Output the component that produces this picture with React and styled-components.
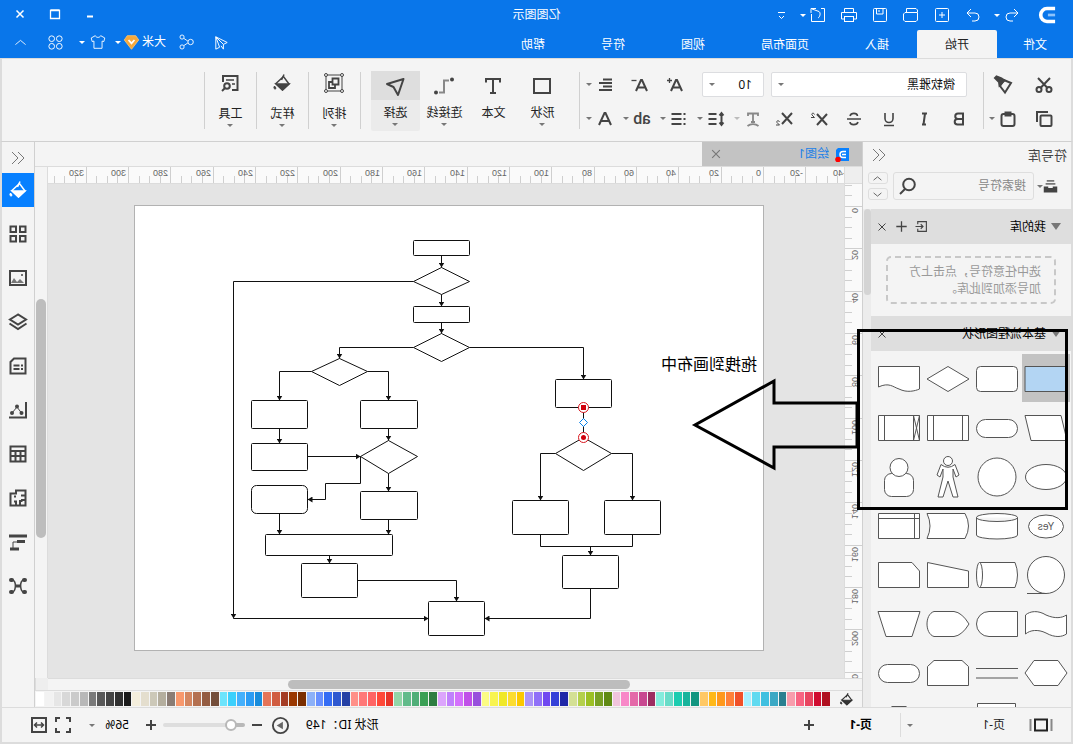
import styled, { createGlobalStyle } from 'styled-components'

import { useEffect, useRef, useState } from 'react'

const GlobalStyle = createGlobalStyle`
  * {
    box-sizing: border-box;
  }

  body {
    margin: 0;
    background: #dedede;
  }

  button, input, select {
    font: inherit;
    color: inherit;
    border: none;
    background: none;
    padding: 0;
    margin: 0;
    outline: none;
  }

  ul {
    list-style: none;
    margin: 0;
    padding: 0;
  }
`

/* The whole window is shown flipped */
const Screen = styled.div`
  position: relative;
  display: flex;
  flex-direction: column;
  width: 100%;
  height: 100vh;
  overflow: hidden;
  transform: scaleX(-1);
  background: #f4f4f4;
  color: #222;
  font-family: 'Noto Sans', 'Noto Sans CJK SC', sans-serif;
  font-size: 12px;
  line-height: 16px;
`

const Svg = styled.svg`
  display: block;
  flex: none;
  fill: none;
  stroke: currentColor;
  stroke-width: ${p => p.$weight || 1};
`

const Caret = styled.span`
  flex: none;
  width: 0;
  height: 0;
  border: 3px solid transparent;
  border-top-color: ${p => p.$color || '#777'};
  border-bottom: none;
`

const Run = styled.div`
  display: flex;
  align-items: center;
  gap: ${p => p.$gap || 0}px;
  margin-left: ${p => p.$left || 0}px;
`

/* ---------- header ---------- */

const Header = styled.header`
  flex: none;
  background: #0976ea;
  color: #fff;
`

const TitleBar = styled.div`
  display: grid;
  grid-template-columns: 1fr auto 1fr;
  align-items: center;
  height: 30px;
`

const QuickTools = styled.div`
  display: flex;
  align-items: center;
  gap: 11px;
  padding-left: 17px;
`

const AppTitle = styled.h1`
  margin: 0;
  font-size: 12px;
  font-weight: 400;
`

const WindowButtons = styled.div`
  display: flex;
  justify-content: flex-end;
  padding: 0 3px 2px 0;
`

const PlainButton = styled.button`
  display: flex;
  align-items: center;
  justify-content: center;
  flex: none;
  width: ${p => p.$width || 20}px;
  height: ${p => p.$height || 24}px;
  color: ${p => p.$color || 'inherit'};
  gap: ${p => p.$gap || 0}px;
  white-space: nowrap;
  cursor: pointer;
`

const TabRow = styled.nav`
  display: flex;
  height: 28px;
`

const MenuTab = styled.button`
  padding: 2px ${p => p.$pad || 28}px 0;
  height: 28px;
  color: #fff;
  border-radius: 2px 2px 0 0;
  cursor: pointer;

  &.active {
    background: #f4f4f4;
    color: #222;
  }
`

const AccountTools = styled.div`
  display: flex;
  align-items: center;
  gap: 8px;
  height: 24px;
  margin-left: auto;
  padding-right: 9px;
`

/* ---------- ribbon ---------- */

const Ribbon = styled.section`
  display: flex;
  flex: none;
  height: 84px;
  padding-top: 12px;
  border: solid #dcdcdc;
  border-width: 1px 2px;
  border-bottom-color: #d0d0d0;
  color: #444;
`

const Divider = styled.div`
  flex: none;
  width: 1px;
  height: 57px;
  margin-top: 1px;
  background: #d0d0d0;
`

const ToolGrid = styled.div`
  display: flex;
  flex-direction: column;
  gap: 9px;
  flex: none;
  padding: 1px ${p => p.$right}px 0 ${p => p.$left}px;
`

const ToolRow = styled.div`
  display: flex;
  align-items: center;
  height: 25px;
  gap: ${p => p.$gap}px;
  padding-left: ${p => p.$indent || 0}px;
`

const InsertTools = styled.div`
  display: flex;
  padding: 0 10px 0 12px;
`

const CaseLabel = styled.span`
  font-family: Roboto, sans-serif;
  font-size: 16px;
  font-weight: 500;
`

const SelectBox = styled.label`
  display: flex;
  align-items: center;
  width: ${p => p.$width}px;
  height: 25px;
  padding: 0 6px 0 11px;
  background: #fff;
  border: 1px solid #dcdde0;
  border-radius: 2px;

  select {
    flex: 1;
    min-width: 0;
    appearance: none;
    color: #111;
  }
`

const BigButton = styled.button`
  display: flex;
  flex-direction: column;
  align-items: center;
  flex: none;
  width: 49px;
  height: 60px;
  border-radius: 2px;
  color: #444;
  background: ${p => p.$active ? '#ebebeb' : 'none'};
  cursor: pointer;
`

const BigIcon = styled.span`
  display: flex;
  align-items: center;
  justify-content: center;
  width: 100%;
  height: 29px;
  margin-bottom: 5px;
  background: ${p => p.$active ? '#dedede' : 'none'};
`

const BigLabel = styled.span`
  color: #222;
  white-space: nowrap;
  margin-bottom: 2px;
`

const GroupButton = styled(BigButton)`
  width: 51px;
`

const GroupIcon = styled(BigIcon)`
  height: 24px;
  margin-bottom: 11px;
`

/* ---------- body ---------- */

const Body = styled.main`
  display: flex;
  flex: 1;
  min-height: 0;
  border: solid #dcdcdc;
  border-width: 0 2px;
`

const Library = styled.aside`
  display: flex;
  flex-direction: column;
  flex: none;
  width: 209px;
  border-right: 1px solid #d0d0d0;
`

const LibraryHead = styled.div`
  display: flex;
  align-items: center;
  justify-content: space-between;
  height: 26px;
  padding: 0 8px 0 4px;

  h2 {
    margin: 0;
    font-size: 13px;
    font-weight: 400;
    color: #444;
  }
`

const SearchRow = styled.div`
  display: flex;
  align-items: center;
  flex: none;
  height: 28px;
  margin: 4px 0 9px;
  padding: 0 5px 0 13px;
  color: #444;
`

const SearchBox = styled.label`
  display: flex;
  align-items: center;
  flex: 1;
  min-width: 0;
  height: 28px;
  margin: 0 5px 0 3px;
  padding: 0 4px 0 7px;
  border: 1px solid #dedede;
  border-radius: 3px;

  input {
    flex: 1;
    min-width: 0;
  }

  input::placeholder {
    color: #888;
    opacity: 1;
  }
`

const Steppers = styled.div`
  display: flex;
  flex-direction: column;
  gap: 4px;

  button {
    display: flex;
    align-items: center;
    justify-content: center;
    width: 20px;
    height: 12px;
    border: 1px solid #dedede;
    border-radius: 3px;
    color: #666;
  }
`

const LibraryBody = styled.div`
  display: flex;
  flex: 1;
  min-height: 0;
`

const LibraryList = styled.div`
  flex: 1;
  overflow: hidden;
`

const Track = styled.div`
  flex: none;
  width: 8px;
  background: #ececec;
`

const Thumb = styled.div`
  width: ${p => p.$width}px;
  height: ${p => p.$height}px;
  margin: ${p => p.$margin || 0};
  border-radius: 5px;
  background: ${p => p.$color || '#bdbdbd'};
`

const GroupHead = styled.div`
  display: flex;
  align-items: center;
  height: 35px;
  padding: 0 1px 0 10px;
  background: #dedede;
  color: #444;

  h3 {
    flex: 1;
    margin: 0 0 0 5px;
    font-size: 12px;
    font-weight: 400;
    color: #000;
  }
`

const Fold = styled.span`
  border: 5px solid transparent;
  border-top: 7px solid #777;
  border-bottom: none;
`

const DropHint = styled.p`
  margin: 12px 15px;
  padding: 5px 0 5px 13px;
  height: 48px;
  border: 2px dashed #c8c8c8;
  border-radius: 5px;
  color: #999;
  line-height: 17px;
`

const ShapeGrid = styled.div`
  display: grid;
  grid-template-columns: repeat(4, 48px);
  gap: 1px;
  padding: 3px 1px;
`

const ShapeButton = styled.button`
  width: 48px;
  height: 48px;
  color: #555;
  background: ${p => p.$active ? '#c3c3c3' : 'none'};

  svg {
    fill: ${p => p.$active ? '#b3d5f3' : '#fff'};
  }

  text {
    fill: #555;
    stroke: none;
    font-family: 'Liberation Sans', sans-serif;
    font-size: 10px;
  }
`

const Workspace = styled.section`
  display: flex;
  flex-direction: column;
  flex: 1;
  min-width: 0;
`

const DocTabs = styled.div`
  flex: none;
  height: 25px;
  border-bottom: 1px solid #dcdcdc;
`

const DocTab = styled.div`
  display: flex;
  align-items: center;
  width: 160px;
  height: 24px;
  padding: 0 6px 0 12px;
  background: #c3c3c3;
  color: #1a80e8;

  span {
    flex: 1;
    margin-left: 6px;
  }
`

const Board = styled.div`
  display: grid;
  flex: 1;
  min-height: 0;
  grid-template-columns: 18px 1fr 13px;
  grid-template-rows: 17px 1fr 13px;
`

const Corner = styled.div`
  background: #eee;
  border: solid #dcdcdc;
  border-width: 0 1px 1px 0;
`

const TopRuler = styled.div`
  min-width: 0;
  overflow: hidden;
  background: #fafafa;
  border-bottom: 1px solid #dcdcdc;
`

const SideRuler = styled(TopRuler)`
  min-height: 0;
  border-bottom: none;
  border-right: 1px solid #dcdcdc;
`

const RulerSvg = styled.svg`
  display: block;
  width: 100%;
  height: 100%;
  stroke: #cfcfcf;
  shape-rendering: crispEdges;

  text {
    stroke: none;
    fill: #666;
    font-family: 'Liberation Sans', sans-serif;
    font-size: 9px;
  }
`

const Canvas = styled.div`
  min-width: 0;
  min-height: 0;
  overflow: hidden;
  padding: 21px 0 0 80px;
  background: #e4e4e4;
`

const Paper = styled.div`
  width: 630px;
  height: 446px;
  background: #fff;
  border: 1px solid #b2b2b2;

  svg {
    display: block;
  }
`

const RightScroll = styled.div`
  grid-column: 3;
  grid-row: 1 / 3;
  border-left: 1px solid #dcdcdc;
`

const BottomScroll = styled.div`
  grid-column: 1 / 3;
  border: solid #dcdcdc;
  border-width: 1px 0;
`

const Palette = styled.div`
  display: flex;
  flex: none;
  align-items: center;
  height: 16px;
  padding-left: 8px;
  color: #333;
`

const Swatches = styled.ul`
  display: flex;
  flex: 1;
  gap: 1px;
  height: 14px;
  margin-left: 9px;
  padding-right: 1px;

  li {
    flex: 1;
  }
`

const Sidebar = styled.aside`
  display: flex;
  flex-direction: column;
  align-items: center;
  flex: none;
  width: 33px;
  overflow: hidden;
  border-left: 1px solid #d0d0d0;
  color: #444;
`

const SideButton = styled.button`
  display: flex;
  align-items: center;
  justify-content: center;
  flex: none;
  width: 32px;
  height: 34px;
  margin-bottom: 10px;
  color: ${p => p.$active ? '#fff' : '#444'};
  background: ${p => p.$active ? '#0780ff' : 'none'};
`

/* ---------- status bar ---------- */

const StatusBar = styled.footer`
  display: flex;
  align-items: center;
  flex: none;
  height: 37px;
  border: 2px solid #dcdcdc;
  border-top-width: 1px;
  color: #444;
`

const PageMenu = styled.div`
  display: flex;
  align-items: center;
  width: 171px;
  height: 24px;
  padding: 0 6px 0 20px;
  border-right: 1px solid #dcdcdc;
  color: #222;

  span:first-of-type {
    flex: 1;
    margin-left: 26px;
  }
`

const PageTab = styled.button`
  margin: 0 30px 0 28px;
  font-weight: 700;
  color: #000;
`

const StatusRight = styled.div`
  display: flex;
  align-items: center;
  margin-left: auto;
  padding-right: 27px;
  color: #444;
`

const ShapeId = styled.span`
  margin-right: 11px;
  color: #000;
`

const ZoomRange = styled.input`
  appearance: none;
  width: 82px;
  height: 12px;
  margin: 0 3px 0 2px;

  &::-webkit-slider-runnable-track {
    height: 4px;
    border-radius: 2px;
    background: linear-gradient(to right, #b8b8b8 16%, #dedede 16%);
  }

  &::-webkit-slider-thumb {
    appearance: none;
    width: 12px;
    height: 12px;
    margin-top: -4px;
    border: 2px solid #b8b8b8;
    border-radius: 50%;
    background: #fff;
  }
`

const ZoomValue = styled.span`
  width: 34px;
  margin-left: 13px;
  color: #000;
`

/* ---------- notes drawn over the window ---------- */

const NoteLayer = styled.svg`
  position: absolute;
  left: 5px;
  top: 329px;
  pointer-events: none;
`

const NoteText = styled.p`
  position: absolute;
  left: 316px;
  top: 352px;
  margin: 0;
  font-size: 16px;
  line-height: 24px;
  color: #000;
`

const icons = {
  logo: <><path d='M1 2.800H10A7 7.200 0 0 1 10 17.200H1' strokeWidth='4' /><path d='M1 10H9' stroke='#8cc2fb' strokeWidth='3' /></>,
  undo: <path d='M8 4 4 8l4 4M4 8h8a4 4 0 0 1 0 8H9' />,
  redo: <path d='M12 4l4 4-4 4M16 8H8a4 4 0 0 0 0 8h3' />,
  add: <><rect x='3.500' y='3.500' width='13' height='13' rx='1' /><path d='M10 7v6M7 10h6' /></>,
  folder: <path d='M3.500 7V5L5 3.500H14.500V7M3.500 7.500H16L17.500 9V15L16 16.500H5L3.500 15Z' />,
  save: <><rect x='3.500' y='3.500' width='13' height='13' rx='1' /><path d='M7 3.500V9H13.500V3.500M11 5V7' /></>,
  print: <><path d='M5.500 7V3.500H14.500V7M5.500 14H2.500V7.500H17.500V14H14.500' /><rect x='5.500' y='11.500' width='9' height='5' /></>,
  share: <path d='M7 3.500H3.500V16.500H16.500V9M16 4 9 6.500C7 8 8 12 10 13M12 3.500H17V8' />,
  more: <path d='M7 7.500h7M8 11l2.500 2.500L13 11' />,
  minimize: <path d='M7 12.500h6' strokeWidth='2' />,
  maximize: <path d='M5.500 6.500h9v8h-9zM5.500 6h9' strokeWidth='1.300' />,
  close: <path d='M6.500 6.500l7 7M13.500 6.500l-7 7' />,
  send: <path d='M16 4 4 10l4 2v5l2.500-3.500M16 4v13l-4-2M16 4 8 12M16 4l-4 11' />,
  nodes: <><circle cx='6' cy='10' r='3' /><circle cx='15.500' cy='4.500' r='2.300' /><circle cx='15.500' cy='15.500' r='2.300' /><path d='M9 9l4.500-3M9 11l4.500 3' /></>,
  gem: <><path d='M5 2H15L18.500 7 10 18 1.500 7Z' fill='#f6a83a' stroke='#ffc56a' /><path d='M6.500 7 10 11l3.500-4' stroke='#fff' strokeWidth='2' /></>,
  shirt: <path d='M7 3 2.500 5.500 3.500 9.500 5.500 9V17H14.500V9L16.500 9.500 17.500 5.500 13 3C12 5.500 8 5.500 7 3Z' />,
  apps: <><circle cx='6' cy='6' r='3' /><circle cx='14' cy='6' r='3' /><circle cx='6' cy='14' r='3' /><circle cx='14' cy='14' r='3' /></>,
  up: <path d='M4 12.500l6-5 6 5' />,
  down: <path d='M4 7.500l6 5 6-5' />,
  scissors: <><circle cx='5' cy='14.500' r='2.500' /><circle cx='15' cy='14.500' r='2.500' /><path d='M4 3 13.500 13M16 3 6.500 13' /></>,
  brush: <><path d='M3 8 10 5 14 11 9 17.500Z' /><path d='M9.500 5.500l3-2 5-2 1.500 1.500-4 4-.5 3.500Z' fill='currentColor' /></>,
  copy: <><rect x='2.500' y='6.500' width='11' height='10.500' rx='1' /><path d='M17 13V3H6' /></>,
  paste: <><rect x='3.500' y='5' width='13' height='12' rx='2' /><path d='M7.500 3.500h5v3h-5z' fill='currentColor' /></>,
  bold: <path d='M6 4.500H11A2.700 2.700 0 0 1 11 10H6ZM6 10h5.500a2.800 2.800 0 0 1 0 5.600H6Z' />,
  italic: <path d='M7 4.500h5M8 15.500h4M9 4.500 10.500 15.500' />,
  underline: <path d='M6 4v5.500a4 4 0 0 0 8 0V4M5 16.500h10' strokeWidth='1.600' />,
  strike: <path d='M3 10h14M14 7C13 3.500 7 3.500 6.500 7M6 13c1 3.500 8 3.500 8 0' strokeWidth='1.600' />,
  sup: <><path d='M2 5l10 11M12 5l-10 11' /><path d='M14.500 5.500C15 3.500 18 4 17 6L14.500 8.500H18' strokeWidth='1' /></>,
  sub: <><path d='M2 4l10 11M12 4l-10 11' /><path d='M14.500 13C15 11 18 11.500 17 13.500L14.500 16H18' strokeWidth='1' /></>,
  textStyle: <path d='M5 7V4.500h10V7M10 4.500V13M8 13h4M4.500 17c3-2.500 8-2.500 11 0' strokeWidth='1.800' stroke='#888' />,
  spacing: <path d='M9.500 5h8M9.500 10h8M9.500 15h8M4.500 4v12M2.500 6.500l2-2.500 2 2.500M2.500 13.500l2 2.500 2-2.500' />,
  list: <path d='M7.500 5h10M7.500 10h10M7.500 15h10M3.500 5h2M3.500 10h2M3.500 15h2' />,
  align: <path d='M3 4.500h9M3 8h13M3 11.500h9M3 15h13' />,
  fontColor: <path d='M4 16 9.500 4h1L16 16M6 12h8' />,
  fontUp: <><path d='M3 16 8 5h1l5 11M5 12.500h7' /><path d='M15.500 3v5M13 5.500h5' strokeWidth='1.300' /></>,
  fontDown: <><path d='M3 16 8 5h1l5 11M5 12.500h7' /><path d='M13.500 5.500h5' strokeWidth='1.300' /></>,
  rect: <rect x='2' y='3' width='16' height='14' />,
  text: <path d='M3 6.500V3H17V6.500M10 3V17M7 17h6' />,
  connector: <><path d='M5 4.500H10V16.500H15' stroke='#888' /><circle cx='2' cy='3.500' r='2' fill='currentColor' stroke='none' /><circle cx='18' cy='16.500' r='2' fill='currentColor' stroke='none' /></>,
  cursor: <path d='M1.500 3 18 8 11.500 11 7 19Z' strokeLinejoin='round' />,
  arrange: <><path d='M2 2h16v16H2z' strokeWidth='1' /><path d='M5.500 5.500h6v6h-6zM12 9h3v6H9v-3' strokeWidth='1.800' /><g fill='#f4f4f4' strokeWidth='1'><circle cx='2' cy='2' r='1.500' /><circle cx='18' cy='2' r='1.500' /><circle cx='2' cy='18' r='1.500' /><circle cx='18' cy='18' r='1.500' /></g></>,
  bucket: <><path d='M8.500 3.500 16 10.500 9.500 17 3 11Z' /><path d='M3 11H16L9.500 17Z' fill='currentColor' /><path d='M8 1.500 10.500 7' /><path d='M17.500 13c2 3-1.500 4-1.500 2Z' fill='currentColor' strokeWidth='1' /></>,
  tools: <><path d='M8 17H2.500V3H17V9' /><path d='M6 7h8M5 11h3' strokeWidth='1.500' /><circle cx='13' cy='13' r='2.800' /><path d='M15 15l3 3' /></>,
  collapse: <path d='M10 4 4 10l6 6M16 4l-6 6 6 6' />,
  drawer: <><path d='M5 2.500h10M3.500 6.500h13' strokeWidth='2.500' stroke='#777' /><path d='M1 10H7V12H13V10H19V18H1Z' fill='currentColor' stroke='none' /></>,
  search: <><circle cx='9' cy='8.500' r='5.800' /><path d='M13 13l5 5' /></>,
  importLib: <path d='M15 7V3.500H3.500V16.500H15V13M18 10H8M11 7l-3 3 3 3' />,
  plus: <path d='M10 2v16M2 10h16' />,
  template: <path d='M2.500 2.500h5.500v5.500h-5.500zM2.500 12h5.500v5.500h-5.500zM12 12h5.500v5.500h-5.500zM12 2.500h5.500v5.500h-5.500z' />,
  image: <><path d='M2 3h16v14H2z' /><path d='M4 15l4-4 3 3 3-4 3 5Z' fill='#777' stroke='none' /><circle cx='6' cy='7' r='1' fill='currentColor' stroke='none' /></>,
  layers: <path d='M10 2.500 18 7.500 10 12.500 2 7.500ZM1.500 11.500 10 17l8.500-5.500' />,
  note: <path d='M2.500 2.500H14L17.500 6V17.500H2.500ZM5 9.500h2M8.500 9.500h6M5 13h2M8.500 13h6' />,
  chart: <><path d='M2 2V17.500H19' /><path d='M6.500 13 11 7l5 6' strokeWidth='1' /><g fill='currentColor' stroke='none'><circle cx='6.500' cy='13' r='2' /><circle cx='11' cy='6.500' r='2' /><circle cx='16' cy='13' r='2' /></g></>,
  table: <path d='M2.500 2.500h15v15h-15zM2.500 7h15M2.500 12h15M7.500 7v10.500M12.500 7v10.500' />,
  plan: <path d='M2.500 2.500H12V5.500H17.500V17.500H2.500ZM2.500 7.500H7M2.500 12H7M8 17V13H5.500M12 17V13.500H14M12 8.500H14' />,
  gantt: <><path d='M1 2.500h18v3H1z' fill='currentColor' stroke='none' /><path d='M3 9.500h8M9 17h9' strokeWidth='3' /><path d='M11 10h4v6' strokeWidth='1' /></>,
  mind: <><path d='M4 4C9 4 8 16 4 16M16 4c-5 0-4 12 0 12M7 10h6' strokeWidth='1.500' /><g fill='currentColor' stroke='none'><rect x='1' y='2' width='5' height='4' rx='2' /><rect x='1' y='14' width='5' height='4' rx='2' /><rect x='14' y='2' width='5' height='4' rx='2' /><rect x='14' y='14' width='5' height='4' rx='2' /><rect x='7.500' y='8.500' width='5' height='3' /></g></>,
  pageView: <><path d='M4 4.500h12v11H4z' /><path d='M-.5 4v12M20.500 4v12' stroke='#888' /></>,
  play: <><circle cx='10' cy='10' r='8' /><path d='M7.500 6 14 10l-6.500 4Z' fill='#666' stroke='none' /></>,
  minus: <path d='M5 10h10' />,
  bigPlus: <path d='M5 10h10M10 5v10' />,
  full: <path d='M3 7V3H7M13 3h4V7M17 13v4H13M7 17H3V13' />,
  fit: <><path d='M3 3h14v14H3z' /><path d='M5.500 10h9M8 7.500 5.500 10 8 12.500M12 7.500l2.500 2.500-2.500 2.500' strokeWidth='1.500' /></>
}

function Icon ({name, size = 20, weight = 1}) {
  return (
    <Svg width={size} height={size} viewBox='0 0 20 20' overflow='visible' $weight={weight} aria-hidden='true'>
      {icons[name]}
    </Svg>
  )
}

const quickTools = ['redo', 'add', 'folder', 'save', 'print']
const menuTabs = ['文件', '开始', '插入', '页面布局', '视图', '符号', '帮助']
const formatTools = ['bold', 'italic', 'underline', 'strike', 'sup', 'sub']
const sideTools = ['template', 'image', 'layers', 'note', 'chart', 'table', 'plan', 'gantt', 'mind']

const insertTools = [
  { icon: 'rect', label: '形状', menu: true },
  { icon: 'text', label: '文本' },
  { icon: 'connector', label: '连接线', menu: true },
  { icon: 'cursor', label: '选择', menu: true }
]

const groupTools = [
  { icon: 'arrange', label: '排列', weight: 2 },
  { icon: 'bucket', label: '样式', weight: 1.5 },
  { icon: 'tools', label: '工具', weight: 2 }
]

const shapes = [
  { name: 'process', draw: <path d='M3 12.500H45V37.500H3Z' /> },
  { name: 'rounded', draw: <rect x='3.500' y='12.500' width='41' height='25' rx='4' /> },
  { name: 'decision', draw: <path d='M3 25 24 12.500 45 25 24 37.500Z' /> },
  { name: 'document', draw: <path d='M3.500 12.500H44.500V33C34 28 30 33 24 35C16 39 8 37 3.500 35Z' /> },
  { name: 'data', draw: <path d='M9 12.500H45L39 37.500H3Z' /> },
  { name: 'terminator', draw: <rect x='3.500' y='16.500' width='41' height='18' rx='9' /> },
  { name: 'predefined', draw: <path d='M3.500 12.500H44.500V37.500H3.500ZM9.500 12.500V37.500M38.500 12.500V37.500' /> },
  { name: 'procedure', draw: <path d='M3.500 12.500H44.500V37.500H3.500ZM9.500 12.500V37.500M38.500 12.500V37.500M3.500 12.500 9.500 37.500M9.500 12.500 3.500 37.500' /> },
  { name: 'ellipse', draw: <ellipse cx='24' cy='25' rx='20.500' ry='12.500' /> },
  { name: 'circle', draw: <circle cx='24' cy='25' r='19' /> },
  { name: 'person', draw: <><circle cx='24' cy='9' r='4.500' /><path d='M17 12.500Q24 18 31 12.500L35 23 32 25 29 17V25L34 45H29L24 29 19 45H14L19 25V17L16 25 13 23Z' /></> },
  { name: 'user', draw: <><rect x='9.500' y='21.500' width='29' height='23' rx='7' /><circle cx='24' cy='15.500' r='9' /></> },
  { name: 'yes', draw: <><ellipse cx='24' cy='25.500' rx='17.500' ry='11.500' /><text x='24' y='29' textAnchor='middle'>Yes</text></> },
  { name: 'database', draw: <path d='M3.500 16.500A20.500 4 0 0 1 44.500 16.500V34A20.500 4 0 0 1 3.500 34ZM3.500 16.500A20.500 4 0 0 0 44.500 16.500' /> },
  { name: 'stored', draw: <path d='M45 12.500H7Q0 25 7 37.500H45Q39 25 45 12.500Z' /> },
  { name: 'internal', draw: <path d='M3.500 12.500H44.500V37.500H3.500ZM8.500 12.500V37.500M3.500 17.500H44.500' /> },
  { name: 'sequential', draw: <><circle cx='24' cy='25' r='18.500' /><path d='M24 43.500H43' /></> },
  { name: 'direct', draw: <><path d='M41.500 12.500H6Q1 25 6 37.500H41.500' /><ellipse cx='41.500' cy='25' rx='3' ry='12.500' /></> },
  { name: 'manualInput', draw: <path d='M3.500 21 44.500 12.500V37.500H3.500Z' /> },
  { name: 'card', draw: <path d='M3.500 21 11 12.500H44.500V37.500H3.500Z' /> },
  { name: 'tape', draw: <path d='M3.500 16C8 19 15 20 24 16C32 11 40 12 44.500 16V35C40 31 32 30 24 34C15 39 8 38 3.500 35Z' /> },
  { name: 'delay', draw: <path d='M3.500 12.500H32A12.500 12.500 0 0 1 32 37.500H3.500Z' /> },
  { name: 'display', draw: <path d='M3 25Q10 13.500 18 12.500H38C43 14 45 20 45 25C45 30 43 36 38 37.500H18Q10 36.500 3 25Z' /> },
  { name: 'manualOp', draw: <path d='M3 12.500H45L37 37.500H11Z' /> },
  { name: 'preparation', draw: <path d='M3 25 12 12.500H36L45 25 36 37.500H12Z' /> },
  { name: 'parallel', draw: <path d='M3 20.500H45M3 30H45' /> },
  { name: 'loop', draw: <path d='M3.500 18.500 10 12.500H38L44.500 18.500V37.500H3.500Z' /> },
  { name: 'control', draw: <rect x='3.500' y='16.500' width='41' height='18' rx='9' /> },
  { name: 'blank' },
  { name: 'frame', draw: <path d='M5.500 6.500H43.500V40H5.500Z' /> },
  { name: 'empty' },
  { name: 'offpage', draw: <path d='M17 9.500H31L40 18V40H8V18Z' /> }
]

const palette = [
  '#b01020 #d00c30 #e84560 #f86482 #f89cac #2a7f90 #3aa8c4 #40c0e0 #60daf0 #a8f0ff',
  '#f05028 #ff8038 #ff981c #ffb818 #ffc864 #129580 #18b49c #1cccb0 #68dcc8 #84ecdc',
  '#9c2c60 #c84890 #e468a8 #f888c8 #f0c4dc #608a14 #78a024 #9cc024 #b4d04c #d4e094',
  '#2028a8 #3440d8 #7048f0 #9070f8 #ac94f8 #fcc800 #fcdc30 #f0e828 #f8f450 #fcfc84',
  '#9850dc #c050e8 #d470fc #c080fc #dca4fc #2e7d42 #3ba055 #50ae78 #62bb8a #92d6a8',
  '#e83428 #ff4838 #ff6464 #ff7878 #ff9088 #2440a4 #2e58d0 #346cf4 #6890ff #8cb0f8',
  '#7a2e00 #9a3800 #a43c24 #d05c40 #e47458 #188cdc #2c9cf4 #44b0fc #3cd0fc #6ce4fc',
  '#744e3a #945c42 #b47050 #d48660 #f8986c #8a7c74 #b4ae9e #ccc8b8 #e4dece #f4eedc',
  '#1a1a1a #303030 #444444 #585858 #7a7a7a #b8b8b8 #cacaca #d8d8d8 #e6e6e6 #f2f2f2 #ffffff'
].join(' ').split(' ')

// x, y, width, height, corner radius
const boxes = [
  [293, 34, 56, 15], [293, 100, 56, 16],
  [455, 194, 56, 28], [455, 237, 56, 27], [455, 279, 56, 28, 5],
  [345, 194, 57, 28], [345, 285, 57, 28],
  [370, 328, 127, 21], [405, 357, 56, 34], [278, 395, 56, 34],
  [151, 173, 56, 28], [194, 294, 56, 34], [102, 294, 56, 34], [144, 349, 56, 33]
]

const diamonds = [
  'M293 75 321 61 349 75 321 88Z',
  'M293 141 321 127 349 141 321 155Z',
  'M395 165 423 152 451 165 423 179Z',
  'M345 250 374 234 402 250 374 267Z',
  'M151 247 179 231 207 247 179 264Z'
]

const arrows = [
  'M321 49V61', 'M321 88V100', 'M321 116V127',
  'M349 75H529V412', 'M529 412H334',
  'M349 141H423V152', 'M293 141H179V173',
  'M451 165H483V194', 'M395 165H374V194',
  'M483 222V237', 'M374 222V234', 'M455 250H402',
  'M402 250V277H437V293H455',
  'M374 267V285', 'M374 313V328', 'M483 307V328',
  'M433 349V357', 'M405 374H306V395',
  'M207 247H222V294', 'M151 247H130V294',
  'M172 340V349', 'M172 382V412H278'
]

// pixels for one ruler unit at the current zoom
const UNIT = 2.1167

function Ruler ({vertical, zero}) {
  const ref = useRef(null)
  const [length, setLength] = useState(0)

  useEffect(() => {
    const measure = () => {
      const el = ref.current
      setLength(vertical ? el.clientHeight : el.clientWidth)
    }
    measure()
    window.addEventListener('resize', measure)
    return () => window.removeEventListener('resize', measure)
  }, [vertical])

  const marks = []
  for (let v = vertical ? -10 : -40; zero + v * UNIT < length; v += 5) {
    marks.push({ v, at: Math.round(zero + v * UNIT), major: v % 20 === 0 })
  }

  return (
    <RulerSvg ref={ref}>
      {marks.map(({v, at, major}) => vertical
        ? <path key={v} d={`M${major ? 0 : 10} ${at + 0.5}H17`} />
        : <path key={v} d={`M${at + 0.5} ${major ? 0 : 9}V16`} />
      )}
      {marks.filter(m => m.major).map(({v, at}) => vertical
        ? <text key={v} transform={`translate(10 ${at + 2}) rotate(-90)`} textAnchor='end'>{v}</text>
        : <text key={v} x={at + 3} y='9'>{v}</text>
      )}
    </RulerSvg>
  )
}

function Flowchart () {
  return (
    <svg width='628' height='444' fill='#fff' stroke='#111'>
      <defs>
        <marker id='head' markerUnits='userSpaceOnUse' viewBox='0 0 5 6' markerWidth='5' markerHeight='6' refX='5' refY='3' orient='auto'>
          <path d='M0 0 5 3 0 6Z' fill='#111' stroke='none' />
        </marker>
      </defs>
      <g transform='translate(0.5 0.5)'>
        {boxes.map(([x, y, w, h, r = 1]) => <rect key={`${x}-${y}`} x={x} y={y} width={w} height={h} rx={r} />)}
        {diamonds.map(d => <path key={d} d={d} />)}
        {arrows.map(d => <path key={d} d={d} fill='none' markerEnd='url(#head)' />)}
        <path d='M222 328V340H130V328M179 201V231' fill='none' />
        <path d='M175 216 179 212 183 216 179 220Z' stroke='#0780e8' />
        <circle cx='179' cy='201' r='5' stroke='#d8141c' />
        <rect x='176.500' y='198.500' width='5' height='5' fill='#d0000c' stroke='none' />
        <circle cx='179' cy='231' r='5' stroke='#d8141c' />
        <circle cx='179' cy='231' r='2.500' fill='#d0000c' stroke='none' />
      </g>
    </svg>
  )
}

function AppHeader () {
  const [tab, setTab] = useState('开始')

  return (
    <Header>
      <TitleBar>
        <QuickTools>
          <Icon name='logo' size={18} />
          <Run $gap={2} $left={5}>
            <PlainButton aria-label='undo'><Icon name='undo' /></PlainButton>
            <Caret $color='#fff' />
          </Run>
          {quickTools.map(name => <PlainButton key={name} aria-label={name}><Icon name={name} /></PlainButton>)}
          <Run $gap={2}>
            <PlainButton aria-label='share'><Icon name='share' /></PlainButton>
            <Caret $color='#fff' />
          </Run>
          <PlainButton $width={14} aria-label='more'><Icon name='more' /></PlainButton>
        </QuickTools>
        <AppTitle>亿图图示</AppTitle>
        <WindowButtons>
          {['minimize', 'maximize', 'close'].map(name =>
            <PlainButton key={name} $width={35} aria-label={name}><Icon name={name} weight={1.5} /></PlainButton>
          )}
        </WindowButtons>
      </TitleBar>
      <TabRow>
        {menuTabs.map(name =>
          <MenuTab
            key={name}
            $pad={name === '文件' ? 26 : 28}
            className={name === tab ? 'active' : ''}
            onClick={() => setTab(name)}
          >{name}</MenuTab>
        )}
        <AccountTools>
          <PlainButton $width={28} aria-label='send'><Icon name='send' size={19} /></PlainButton>
          <PlainButton $width={26} aria-label='nodes'><Icon name='nodes' size={18} /></PlainButton>
          <PlainButton $width={51} $gap={2}>
            <span>大米</span>
            <Icon name='gem' size={17} />
            <Caret $color='#fff' />
          </PlainButton>
          <PlainButton $width={28} $gap={4} aria-label='theme'>
            <Icon name='shirt' size={18} />
            <Caret $color='#fff' />
          </PlainButton>
          <PlainButton $width={30} aria-label='apps'><Icon name='apps' size={19} /></PlainButton>
          <PlainButton $width={24} aria-label='fold'><Icon name='up' size={17} /></PlainButton>
        </AccountTools>
      </TabRow>
    </Header>
  )
}

function DropTool ({icon, label, color}) {
  return (
    <PlainButton $width={31} $gap={1} aria-label={icon || label}>
      <PlainButton as='span' $width={24}>
        {icon ? <Icon name={icon} weight={2} /> : <CaseLabel>{label}</CaseLabel>}
      </PlainButton>
      <Caret $color={color} />
    </PlainButton>
  )
}

function AppRibbon () {
  const [tool, setTool] = useState('选择')

  return (
    <Ribbon>
      <ToolGrid $left={12} $right={4}>
        <ToolRow $gap={10}>
          <PlainButton $width={30} aria-label='cut'><Icon name='scissors' weight={2} /></PlainButton>
          <PlainButton $width={30} aria-label='brush'><Icon name='brush' weight={2} /></PlainButton>
        </ToolRow>
        <ToolRow $gap={10}>
          <PlainButton $width={30} aria-label='copy'><Icon name='copy' weight={2} /></PlainButton>
          <PlainButton $width={31} $gap={3} aria-label='paste'>
            <Icon name='paste' weight={2} />
            <Caret />
          </PlainButton>
        </ToolRow>
      </ToolGrid>
      <Divider />
      <ToolGrid $left={12} $right={6}>
        <ToolRow $gap={7} $indent={4}>
          <SelectBox $width={196}>
            <select aria-label='字体' defaultValue='微软雅黑'>
              <option>微软雅黑</option>
            </select>
            <Caret />
          </SelectBox>
          <SelectBox $width={62}>
            <select aria-label='字号' defaultValue='10'>
              <option>10</option>
            </select>
            <Caret />
          </SelectBox>
          <Run $gap={10} $left={8}>
            <PlainButton $width={24} aria-label='fontUp'><Icon name='fontUp' weight={2} /></PlainButton>
            <PlainButton $width={26} aria-label='fontDown'><Icon name='fontDown' weight={2} /></PlainButton>
            <DropTool icon='align' />
          </Run>
        </ToolRow>
        <ToolRow $gap={7}>
          <Run $gap={11}>
            {formatTools.map(name =>
              <PlainButton key={name} $width={24} aria-label={name}><Icon name={name} weight={2} /></PlainButton>
            )}
          </Run>
          <Run $gap={6}>
            <DropTool icon='textStyle' color='#bbb' />
            <DropTool icon='spacing' />
            <DropTool icon='list' />
            <DropTool label='ab' />
            <DropTool icon='fontColor' />
          </Run>
        </ToolRow>
      </ToolGrid>
      <Divider />
      <InsertTools>
        {insertTools.map(t =>
          <BigButton key={t.label} $active={t.label === tool} onClick={() => setTool(t.label)}>
            <BigIcon $active={t.label === tool}><Icon name={t.icon} weight={2} /></BigIcon>
            <BigLabel>{t.label}</BigLabel>
            {t.menu && <Caret />}
          </BigButton>
        )}
      </InsertTools>
      <Divider />
      {groupTools.map(t => [
        <GroupButton key={t.label}>
          <GroupIcon><Icon name={t.icon} weight={t.weight} /></GroupIcon>
          <BigLabel>{t.label}</BigLabel>
          <Caret />
        </GroupButton>,
        <Divider key={t.icon} />
      ])}
    </Ribbon>
  )
}

function SymbolLibrary () {
  const [shape, setShape] = useState('process')

  return (
    <Library>
      <LibraryHead>
        <h2>符号库</h2>
        <PlainButton $width={16} $color='#777' aria-label='collapse'><Icon name='collapse' /></PlainButton>
      </LibraryHead>
      <SearchRow>
        <PlainButton $width={21} aria-label='drawer'>
          <Icon name='drawer' size={15} />
          <Caret />
        </PlainButton>
        <SearchBox>
          <input type='text' placeholder='搜索符号' aria-label='搜索符号' />
          <Icon name='search' weight={2} />
        </SearchBox>
        <Steppers>
          <button aria-label='previous'><Icon name='up' size={13} weight={1.5} /></button>
          <button aria-label='next'><Icon name='down' size={13} weight={1.5} /></button>
        </Steppers>
      </SearchRow>
      <LibraryBody>
        <LibraryList>
          <GroupHead>
            <Fold />
            <h3>我的库</h3>
            <PlainButton aria-label='import'><Icon name='importLib' size={15} weight={1.5} /></PlainButton>
            <PlainButton aria-label='add'><Icon name='plus' size={13} weight={2} /></PlainButton>
            <PlainButton aria-label='close'><Icon name='close' /></PlainButton>
          </GroupHead>
          <DropHint>选中任意符号，点击上方<br />加号添加到此库。</DropHint>
          <GroupHead>
            <Fold />
            <h3>基本流程图形状</h3>
            <PlainButton aria-label='close'><Icon name='close' /></PlainButton>
          </GroupHead>
          <ShapeGrid>
            {shapes.map(s =>
              <ShapeButton
                key={s.name}
                aria-label={s.name}
                $active={s.name === shape}
                onClick={() => setShape(s.name)}
              >
                <Svg width='48' height='48' viewBox='0 0 48 48'>{s.draw}</Svg>
              </ShapeButton>
            )}
          </ShapeGrid>
        </LibraryList>
        <Track><Thumb $width={7} $height={86} $color='#d4d4d4' /></Track>
      </LibraryBody>
    </Library>
  )
}

function Drawing () {
  return (
    <Workspace>
      <DocTabs>
        <DocTab>
          <svg width='15' height='15' viewBox='0 0 15 15' fill='none' aria-hidden='true'>
            <path d='M1 1H12L14 3V14H1Z' fill='#0780ff' />
            <path d='M4 4.500H7A3 3 0 0 1 7 10.500H4M4 7.500H8' stroke='#fff' strokeWidth='1.500' />
            <circle cx='12' cy='12.500' r='2.800' fill='#f00' />
          </svg>
          <span>绘图1</span>
          <PlainButton $width={16} $color='#777' aria-label='close'><Icon name='close' size={22} /></PlainButton>
        </DocTab>
      </DocTabs>
      <Board>
        <Corner />
        <TopRuler><Ruler zero={80} /></TopRuler>
        <SideRuler><Ruler vertical zero={22} /></SideRuler>
        <Canvas>
          <Paper><Flowchart /></Paper>
        </Canvas>
        <RightScroll><Thumb $width={10} $height={239} $margin='132px 0 0 1px' /></RightScroll>
        <BottomScroll><Thumb $width={342} $height={9} $margin='1px 0 0 232px' /></BottomScroll>
        <Corner />
      </Board>
      <Palette>
        <Icon name='bucket' size={15} weight={1.5} />
        <Swatches>
          {palette.map(color => <li key={color} style={{ background: color }} />)}
        </Swatches>
      </Palette>
    </Workspace>
  )
}

function AppStatus () {
  const [zoom, setZoom] = useState(11)

  return (
    <StatusBar>
      <PageMenu>
        <Icon name='pageView' weight={2} />
        <span>页-1</span>
        <Caret />
      </PageMenu>
      <PageTab>页-1</PageTab>
      <PlainButton aria-label='new page'><Icon name='bigPlus' weight={2} /></PlainButton>
      <StatusRight>
        <ShapeId>形状 ID：149</ShapeId>
        <PlainButton $width={28} aria-label='play'><Icon name='play' weight={2} size={19} /></PlainButton>
        <PlainButton aria-label='zoom out'><Icon name='minus' weight={2} /></PlainButton>
        <ZoomRange type='range' aria-label='zoom' value={zoom} onChange={e => setZoom(Number(e.target.value))} />
        <PlainButton $width={18} aria-label='zoom in'><Icon name='bigPlus' weight={2} /></PlainButton>
        <ZoomValue>56%</ZoomValue>
        <Caret />
        <Run $gap={4} $left={16}>
          <PlainButton aria-label='full screen'><Icon name='full' weight={2} /></PlainButton>
          <PlainButton aria-label='fit width'><Icon name='fit' weight={2} /></PlainButton>
        </Run>
      </StatusRight>
    </StatusBar>
  )
}

function Notes () {
  return (
    <>
      <NoteLayer width='380' height='182' fill='none' stroke='#000' strokeWidth='3'>
        <path d='M1.500 1.500H209.500V179.500H1.500Z' />
        <path d='M211 74H294V52L373 96 294 139V118H211Z' />
      </NoteLayer>
      <NoteText>拖拽到画布中</NoteText>
    </>
  )
}

function App () {
  return (
    <Screen>
      <GlobalStyle />
      <AppHeader />
      <AppRibbon />
      <Body>
        <SymbolLibrary />
        <Drawing />
        <Sidebar>
          <PlainButton $width={32} $height={31} $color='#777' aria-label='collapse'><Icon name='collapse' /></PlainButton>
          <SideButton $active aria-label='style'><Icon name='bucket' weight={1.5} /></SideButton>
          {sideTools.map(name =>
            <SideButton key={name} aria-label={name}><Icon name={name} weight={2} /></SideButton>
          )}
        </Sidebar>
      </Body>
      <AppStatus />
      <Notes />
    </Screen>
  )
}

export default App
